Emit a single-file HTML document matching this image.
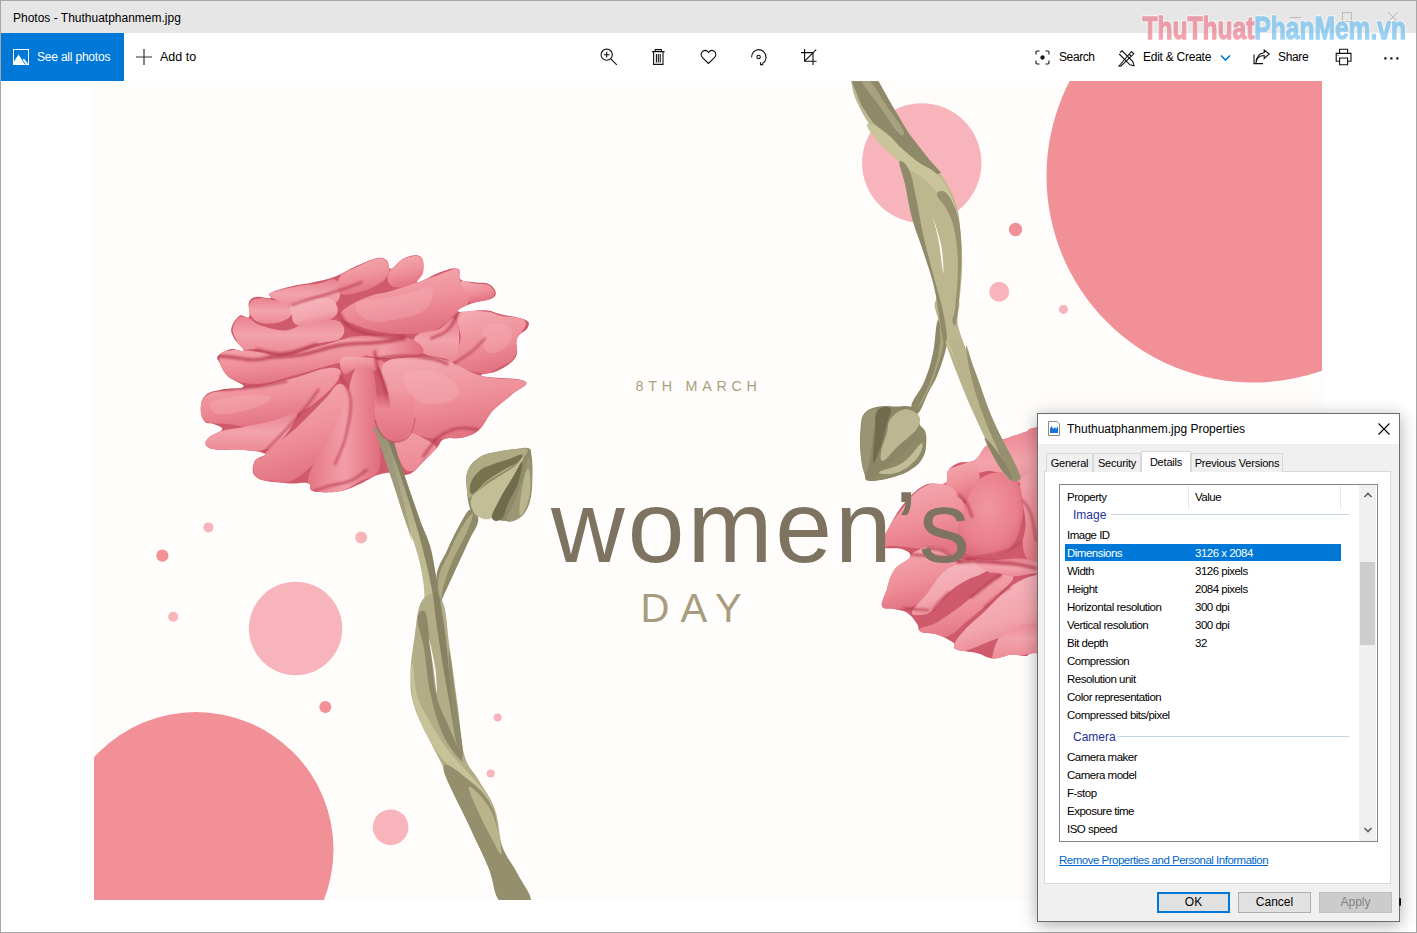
<!DOCTYPE html>
<html><head><meta charset="utf-8">
<style>
*{margin:0;padding:0;box-sizing:border-box}
html,body{width:1417px;height:933px;overflow:hidden;background:#fff;font-family:"Liberation Sans",sans-serif;color:#000}
.abs{position:absolute}
#win{position:absolute;left:0;top:0;width:1417px;height:933px;border:1px solid #a6a6a6;background:#fff}
#titlebar{position:absolute;left:0;top:0;width:1415px;height:32px;background:#e6e6e6}
.t{position:absolute;white-space:nowrap}
#img{position:absolute;left:94px;top:81px;width:1228px;height:819px;background:#fffdfc;overflow:hidden}
#dlg{position:absolute;left:1037px;top:413px;width:363px;height:509px;background:#f0f0f0;border:1px solid #6b6b6b;box-shadow:0 3px 16px rgba(0,0,0,0.32)}
.row{position:absolute;height:18px;font-size:11.5px;letter-spacing:-0.5px;line-height:18px;white-space:nowrap}
.tab{font-size:11px;letter-spacing:-0.2px;line-height:18px;text-align:center;background:#f0f0f0;border:1px solid #d9d9d9;border-bottom:none;white-space:nowrap}
.tab.sel{background:#fff;line-height:20px}
.grp{position:absolute;height:18px;font-size:12px;line-height:18px;color:#1f3396}
.btn{position:absolute;top:478px;width:73px;height:21px;background:#e1e1e1;border:1px solid #adadad;font-size:12px;line-height:19px;text-align:center}
</style></head><body>
<div id="win">
  <div id="titlebar"></div>
</div>
<div class="t" style="left:13px;top:11px;font-size:12px;color:#000">Photos - Thuthuatphanmem.jpg</div>
<!-- window controls -->
<svg class="abs" style="left:1280px;top:8px" width="130" height="20">
  <line x1="10" y1="9.5" x2="21" y2="9.5" stroke="#b9b9b9" stroke-width="1"/>
  <rect x="62.5" y="4.5" width="9" height="9" fill="none" stroke="#b9b9b9"/>
  <path d="M108 4 L118 14 M118 4 L108 14" stroke="#b9b9b9" stroke-width="1"/>
</svg>
<!-- toolbar -->
<div class="abs" style="left:1px;top:33px;width:123px;height:48px;background:#0078d7"></div>
<svg class="abs" style="left:13px;top:49px" width="16" height="16" viewBox="0 0 16 16">
  <rect x="0.5" y="0.5" width="15" height="15" fill="none" stroke="#fff"/>
  <path d="M1 15 L1 12.5 L5.5 5.5 L9.5 11.5 L11 9.5 L15 15 Z" fill="#fff"/><path d="M9.5 11.5 L12.5 15.5" stroke="#0078d7" stroke-width="1"/>
</svg>
<div class="t" style="left:37px;top:50px;font-size:12px;letter-spacing:-0.2px;color:#fff">See all photos</div>
<svg class="abs" style="left:136px;top:49px" width="16" height="16"><path d="M8 0V16M0 8H16" stroke="#333" stroke-width="1.2"/></svg>
<div class="t" style="left:160px;top:50px;font-size:12.5px;color:#000">Add to</div>

<svg id="art" class="abs" style="left:94px;top:81px" width="1228" height="819" viewBox="94 81 1228 819">
  <rect x="94" y="81" width="1228" height="819" fill="#fffdfc"/>
  <g fill="#f19097">
    <circle cx="1253" cy="176" r="206.5"/>
    <circle cx="196" cy="849.5" r="137.5"/>
    <circle cx="1015.5" cy="229.5" r="6.7"/>
    <circle cx="162.4" cy="555.6" r="6.1"/>
    <circle cx="325.3" cy="707" r="6"/>
  </g>
  <g fill="#f8b4bb">
    <circle cx="921.8" cy="163" r="59.7"/>
    <circle cx="295.6" cy="628.5" r="46.7"/>
    <circle cx="390.6" cy="827.2" r="17.8"/>
    <circle cx="999.2" cy="291.7" r="10"/>
    <circle cx="1063.4" cy="309.4" r="4.5"/>
    <circle cx="208.4" cy="527.4" r="5"/>
    <circle cx="173.2" cy="616.7" r="5"/>
    <circle cx="361.2" cy="537.5" r="6"/>
    <circle cx="497.6" cy="717.5" r="4"/>
    <circle cx="490.6" cy="773.5" r="4"/>
  </g>
  <g id="flowers">
<defs>
 <linearGradient id="pk1" x1="0" y1="0" x2="0.3" y2="1"><stop offset="0" stop-color="#f5acb3"/><stop offset="0.6" stop-color="#ef9099"/><stop offset="1" stop-color="#e27483"/></linearGradient>
 <linearGradient id="pk2" x1="0" y1="0" x2="0" y2="1"><stop offset="0" stop-color="#e98290"/><stop offset="0.5" stop-color="#f3a3ab"/><stop offset="1" stop-color="#ec8a95"/></linearGradient>
 <linearGradient id="pk3" x1="0" y1="0" x2="1" y2="0"><stop offset="0" stop-color="#e57684"/><stop offset="0.5" stop-color="#f29ea7"/><stop offset="1" stop-color="#e06c7b"/></linearGradient>
 <radialGradient id="pk4" cx="0.45" cy="0.4" r="0.65"><stop offset="0" stop-color="#f0969f"/><stop offset="0.7" stop-color="#e97f8b"/><stop offset="1" stop-color="#d9677a"/></radialGradient>
 <linearGradient id="lsg" gradientUnits="userSpaceOnUse" x1="0" y1="430" x2="0" y2="630"><stop offset="0" stop-color="#98937a"/><stop offset="0.5" stop-color="#bcb78f"/><stop offset="1" stop-color="#c4bf95"/></linearGradient>
 <linearGradient id="pk5" x1="0" y1="0" x2="0.4" y2="1"><stop offset="0" stop-color="#f7bcc1"/><stop offset="0.7" stop-color="#f3a6ae"/><stop offset="1" stop-color="#e98792"/></linearGradient>
 <linearGradient id="lobe" x1="0" y1="0" x2="0" y2="1"><stop offset="0" stop-color="#ec8893" stop-opacity="0"/><stop offset="0.35" stop-color="#ec8893"/><stop offset="1" stop-color="#e07080"/></linearGradient>
 <linearGradient id="st1" x1="0" y1="0" x2="1" y2="0"><stop offset="0" stop-color="#9d9773"/><stop offset="0.5" stop-color="#c6c198"/><stop offset="1" stop-color="#8f896a"/></linearGradient>
 <linearGradient id="bud" x1="0" y1="0" x2="1" y2="1"><stop offset="0" stop-color="#7c7a55"/><stop offset="0.5" stop-color="#a6a47a"/><stop offset="1" stop-color="#6f6d4b"/></linearGradient>
 <clipPath id="lfclip"><path d="M200.7,408.1 C201.0,402.7 201.8,398.4 206.1,394.7 C210.4,391.0 214.7,391.0 222.2,389.4 C229.7,387.8 242.5,389.4 243.6,386.7 C244.7,384.0 232.3,380.8 227.5,376.0 C222.7,371.2 221.4,366.6 219.5,362.6 C217.6,358.6 216.0,358.6 218.1,355.9 C220.2,353.2 225.1,350.3 230.2,349.2 C235.3,348.1 242.8,352.7 243.6,350.5 C244.4,348.3 236.6,343.0 234.2,338.4 C231.8,333.8 230.4,332.2 231.5,327.7 C232.6,323.2 236.1,317.8 239.6,315.7 C243.1,313.6 247.1,319.7 249.0,317.0 C250.9,314.3 247.4,306.3 249.0,302.3 C250.6,298.3 252.7,297.7 257.0,296.9 C261.3,296.1 267.7,299.0 270.4,298.2 C273.1,297.4 266.1,295.3 270.4,292.9 C274.7,290.5 283.2,288.3 291.8,286.2 C300.4,284.1 304.7,284.1 313.3,282.2 C321.9,280.3 326.1,280.0 334.7,276.8 C343.3,273.6 347.6,269.9 356.2,266.1 C364.8,262.3 371.4,259.1 377.6,258.0 C383.8,256.9 384.3,258.5 387.0,260.7 C389.7,262.9 387.5,269.3 391.0,268.8 C394.5,268.3 398.5,260.4 404.4,258.0 C410.3,255.6 416.7,254.0 420.5,256.7 C424.3,259.4 423.7,266.3 423.2,271.4 C422.7,276.5 414.1,282.2 417.8,282.2 C421.5,282.2 433.9,274.1 441.9,271.4 C449.9,268.7 454.2,267.2 458.0,268.8 C461.8,270.4 457.5,276.8 460.7,279.5 C463.9,282.2 468.2,281.1 474.1,282.2 C480.0,283.3 486.2,281.9 490.2,284.8 C494.2,287.7 498.0,293.1 494.2,296.9 C490.4,300.7 478.6,300.7 471.4,303.6 C464.2,306.5 455.3,310.3 458.0,311.6 C460.7,312.9 476.2,309.8 484.8,310.3 C493.4,310.8 492.9,312.4 500.9,314.3 C508.9,316.2 519.6,317.0 525.0,319.7 C530.4,322.4 529.3,324.0 527.7,327.7 C526.1,331.4 519.4,332.5 517.0,338.4 C514.6,344.3 519.4,350.8 515.6,357.2 C511.8,363.6 504.9,366.8 498.2,370.6 C491.5,374.4 476.7,373.9 482.1,376.0 C487.5,378.1 519.1,377.6 525.0,381.3 C530.9,385.0 518.0,388.8 511.6,394.7 C505.2,400.6 499.2,403.8 492.8,410.8 C486.4,417.8 485.3,424.2 479.4,429.6 C473.5,435.0 470.4,435.7 463.4,437.6 C456.4,439.5 450.0,436.8 444.6,438.9 C439.2,441.0 440.9,443.7 436.6,448.3 C432.3,452.9 428.0,456.9 423.2,461.7 C418.4,466.5 416.7,469.7 412.4,472.4 C408.1,475.1 405.4,475.1 401.7,475.1 C398.0,475.1 398.5,472.4 393.7,472.4 C388.9,472.4 384.0,472.9 377.6,475.1 C371.2,477.3 369.0,480.0 361.5,483.2 C354.0,486.4 349.7,489.6 340.1,491.2 C330.5,492.8 319.7,492.8 313.3,491.2 C306.9,489.6 313.3,484.8 307.9,483.2 C302.5,481.6 296.7,484.3 286.5,483.2 C276.3,482.1 263.4,482.1 257.0,477.8 C250.6,473.5 252.7,466.5 254.3,461.7 C255.9,456.9 267.7,456.1 265.0,453.7 C262.3,451.3 250.5,450.5 240.9,449.7 C231.3,448.9 223.8,450.5 216.8,449.7 C209.8,448.9 207.7,448.0 206.1,445.6 C204.5,443.2 205.6,440.8 208.8,437.6 C212.0,434.4 221.1,432.3 222.2,429.6 C223.3,426.9 217.6,425.8 214.1,424.2 C210.6,422.6 207.4,424.7 204.7,421.5 C202.0,418.3 200.4,413.5 200.7,408.1Z"/></clipPath>
 <filter id="soft" x="-5%" y="-5%" width="110%" height="110%"><feGaussianBlur stdDeviation="0.9"/></filter>
 <clipPath id="rfbox"><path d="M850 400H1037V413H1200V700H850Z"/></clipPath>
 <clipPath id="rfclip"><path d="M1041.6,426.7 C1022.7,429.1 1031.9,430.0 1025.5,432.1 C1019.1,434.2 1015.3,435.5 1009.4,437.4 C1003.5,439.3 1000.8,439.6 996.0,441.5 C991.2,443.4 989.6,443.1 985.3,446.8 C981.0,450.5 980.0,457.0 974.6,460.2 C969.2,463.4 963.9,460.8 958.5,462.9 C953.1,465.0 950.5,466.9 947.8,470.9 C945.1,474.9 949.9,480.0 945.1,483.0 C940.3,486.0 932.2,481.1 923.6,485.7 C915.0,490.3 909.7,496.4 902.2,505.8 C894.7,515.2 890.9,524.6 886.1,532.6 C881.3,540.6 878.0,542.9 878.0,546.0 C878.0,549.1 881.3,547.6 886.1,548.2 C890.9,548.8 897.4,547.5 902.2,549.2 C907.0,550.9 911.8,552.6 910.2,556.8 C908.6,561.0 898.9,563.2 894.1,570.2 C889.3,577.2 888.5,584.4 886.1,591.6 C883.7,598.8 880.5,602.9 882.1,606.4 C883.7,609.9 889.0,607.7 894.1,609.0 C899.2,610.3 902.9,610.1 907.5,613.1 C912.1,616.1 914.2,620.1 916.9,623.8 C919.6,627.5 916.9,629.7 920.9,631.8 C924.9,633.9 930.6,632.3 937.0,634.5 C943.4,636.7 949.3,639.6 953.1,642.6 C956.9,645.6 951.0,647.2 955.8,649.3 C960.6,651.4 969.8,651.4 977.3,653.3 C984.8,655.2 986.3,658.3 993.3,658.6 C1000.3,658.9 1005.7,655.1 1012.1,654.6 C1018.5,654.1 1019.6,656.3 1025.5,656.0 C1031.4,655.7 1022.7,652.5 1041.6,653.3 C1060.5,654.1 1104.3,706.7 1120.0,660.0 C1135.7,613.3 1135.7,466.7 1120.0,420.0 C1104.3,373.3 1060.5,424.3 1041.6,426.7Z"/></clipPath>
</defs>

<g id="lf"><path d="M200.7,408.1 C201.0,402.7 201.8,398.4 206.1,394.7 C210.4,391.0 214.7,391.0 222.2,389.4 C229.7,387.8 242.5,389.4 243.6,386.7 C244.7,384.0 232.3,380.8 227.5,376.0 C222.7,371.2 221.4,366.6 219.5,362.6 C217.6,358.6 216.0,358.6 218.1,355.9 C220.2,353.2 225.1,350.3 230.2,349.2 C235.3,348.1 242.8,352.7 243.6,350.5 C244.4,348.3 236.6,343.0 234.2,338.4 C231.8,333.8 230.4,332.2 231.5,327.7 C232.6,323.2 236.1,317.8 239.6,315.7 C243.1,313.6 247.1,319.7 249.0,317.0 C250.9,314.3 247.4,306.3 249.0,302.3 C250.6,298.3 252.7,297.7 257.0,296.9 C261.3,296.1 267.7,299.0 270.4,298.2 C273.1,297.4 266.1,295.3 270.4,292.9 C274.7,290.5 283.2,288.3 291.8,286.2 C300.4,284.1 304.7,284.1 313.3,282.2 C321.9,280.3 326.1,280.0 334.7,276.8 C343.3,273.6 347.6,269.9 356.2,266.1 C364.8,262.3 371.4,259.1 377.6,258.0 C383.8,256.9 384.3,258.5 387.0,260.7 C389.7,262.9 387.5,269.3 391.0,268.8 C394.5,268.3 398.5,260.4 404.4,258.0 C410.3,255.6 416.7,254.0 420.5,256.7 C424.3,259.4 423.7,266.3 423.2,271.4 C422.7,276.5 414.1,282.2 417.8,282.2 C421.5,282.2 433.9,274.1 441.9,271.4 C449.9,268.7 454.2,267.2 458.0,268.8 C461.8,270.4 457.5,276.8 460.7,279.5 C463.9,282.2 468.2,281.1 474.1,282.2 C480.0,283.3 486.2,281.9 490.2,284.8 C494.2,287.7 498.0,293.1 494.2,296.9 C490.4,300.7 478.6,300.7 471.4,303.6 C464.2,306.5 455.3,310.3 458.0,311.6 C460.7,312.9 476.2,309.8 484.8,310.3 C493.4,310.8 492.9,312.4 500.9,314.3 C508.9,316.2 519.6,317.0 525.0,319.7 C530.4,322.4 529.3,324.0 527.7,327.7 C526.1,331.4 519.4,332.5 517.0,338.4 C514.6,344.3 519.4,350.8 515.6,357.2 C511.8,363.6 504.9,366.8 498.2,370.6 C491.5,374.4 476.7,373.9 482.1,376.0 C487.5,378.1 519.1,377.6 525.0,381.3 C530.9,385.0 518.0,388.8 511.6,394.7 C505.2,400.6 499.2,403.8 492.8,410.8 C486.4,417.8 485.3,424.2 479.4,429.6 C473.5,435.0 470.4,435.7 463.4,437.6 C456.4,439.5 450.0,436.8 444.6,438.9 C439.2,441.0 440.9,443.7 436.6,448.3 C432.3,452.9 428.0,456.9 423.2,461.7 C418.4,466.5 416.7,469.7 412.4,472.4 C408.1,475.1 405.4,475.1 401.7,475.1 C398.0,475.1 398.5,472.4 393.7,472.4 C388.9,472.4 384.0,472.9 377.6,475.1 C371.2,477.3 369.0,480.0 361.5,483.2 C354.0,486.4 349.7,489.6 340.1,491.2 C330.5,492.8 319.7,492.8 313.3,491.2 C306.9,489.6 313.3,484.8 307.9,483.2 C302.5,481.6 296.7,484.3 286.5,483.2 C276.3,482.1 263.4,482.1 257.0,477.8 C250.6,473.5 252.7,466.5 254.3,461.7 C255.9,456.9 267.7,456.1 265.0,453.7 C262.3,451.3 250.5,450.5 240.9,449.7 C231.3,448.9 223.8,450.5 216.8,449.7 C209.8,448.9 207.7,448.0 206.1,445.6 C204.5,443.2 205.6,440.8 208.8,437.6 C212.0,434.4 221.1,432.3 222.2,429.6 C223.3,426.9 217.6,425.8 214.1,424.2 C210.6,422.6 207.4,424.7 204.7,421.5 C202.0,418.3 200.4,413.5 200.7,408.1Z" fill="#cf5a6c"/><g clip-path="url(#lfclip)"><path d="M250.3,302.3 C252.2,299.1 255.7,298.7 259.7,298.2 C263.7,297.7 265.0,298.5 270.4,299.6 C275.8,300.7 282.2,300.7 286.5,303.6 C290.8,306.5 293.4,310.5 291.8,314.3 C290.2,318.1 284.8,320.8 278.4,322.4 C272.0,324.0 265.3,324.0 259.7,322.4 C254.1,320.8 252.2,318.3 250.3,314.3 C248.4,310.3 248.4,305.5 250.3,302.3Z" fill="url(#pk2)"/><path d="M270.4,292.9 C275.2,290.5 287.6,288.1 297.2,286.2 C306.8,284.3 311.1,284.8 318.6,283.5 C326.1,282.2 330.4,278.2 334.7,279.5 C339.0,280.8 340.1,285.4 340.1,290.2 C340.1,295.0 340.6,299.8 334.7,303.6 C328.8,307.4 319.2,308.5 310.6,309.0 C302.0,309.5 299.3,308.5 291.8,306.3 C284.3,304.1 277.4,300.9 273.1,298.2 C268.8,295.5 265.6,295.3 270.4,292.9Z" fill="url(#pk2)"/><path d="M340.1,276.8 C343.8,271.4 351.3,269.7 358.8,266.1 C366.3,262.5 372.0,259.4 377.6,258.6 C383.2,257.8 384.9,259.0 387.0,262.1 C389.1,265.2 390.2,269.6 388.3,274.1 C386.4,278.6 384.0,281.0 377.6,284.8 C371.2,288.6 363.7,291.3 356.2,292.9 C348.7,294.5 343.3,296.1 340.1,292.9 C336.9,289.7 336.4,282.2 340.1,276.8Z" fill="url(#pk1)"/><path d="M291.5,303.6 C295.0,300.7 301.4,300.7 308.9,299.6 C316.4,298.5 323.4,296.9 329.0,298.2 C334.6,299.5 335.9,302.5 337.0,306.3 C338.1,310.1 338.6,313.3 334.3,317.0 C330.0,320.7 323.1,323.4 315.6,325.0 C308.1,326.6 301.6,327.1 296.8,325.0 C292.0,322.9 292.6,318.6 291.5,314.3 C290.4,310.0 288.0,306.5 291.5,303.6Z" fill="url(#pk5)"/><path d="M391.0,268.8 C394.2,264.1 398.5,260.9 404.4,258.6 C410.3,256.3 416.7,254.9 420.5,257.5 C424.3,260.1 424.0,266.2 423.2,271.4 C422.4,276.6 421.3,280.3 416.5,283.5 C411.7,286.7 404.6,287.8 399.0,287.5 C393.4,287.2 389.9,285.9 388.3,282.2 C386.7,278.5 387.8,273.5 391.0,268.8Z" fill="url(#pk1)"/><path d="M460.7,282.2 C462.3,279.3 468.2,282.7 474.1,283.5 C480.0,284.3 486.5,283.5 490.2,286.2 C493.9,288.9 496.0,293.7 492.8,296.9 C489.6,300.1 479.5,302.0 474.1,302.3 C468.7,302.6 468.7,302.2 466.0,298.2 C463.3,294.2 459.1,285.1 460.7,282.2Z" fill="url(#pk1)"/><path d="M340.1,314.3 C341.7,308.9 353.5,303.0 364.2,298.2 C374.9,293.4 381.4,293.9 393.7,290.2 C406.0,286.5 415.1,283.3 425.8,279.5 C436.5,275.7 440.9,273.4 447.3,271.4 C453.7,269.4 455.3,267.1 458.0,269.3 C460.7,271.5 458.6,275.9 460.7,282.2 C462.8,288.5 469.8,294.5 468.7,300.9 C467.6,307.3 461.2,308.9 455.3,314.3 C449.4,319.7 446.2,323.9 439.2,327.7 C432.2,331.5 430.7,332.0 420.5,333.1 C410.3,334.2 401.2,334.7 388.3,333.1 C375.4,331.5 365.8,328.8 356.2,325.0 C346.6,321.2 338.5,319.7 340.1,314.3Z" fill="url(#pk1)"/><path d="M458.0,314.3 C462.8,308.9 476.2,311.3 484.8,311.6 C493.4,311.9 492.9,313.8 500.9,315.7 C508.9,317.6 521.5,316.5 525.0,321.0 C528.5,325.5 520.4,331.2 518.3,338.4 C516.2,345.6 518.3,351.3 514.3,357.2 C510.3,363.1 504.6,364.7 498.2,367.9 C491.8,371.1 490.7,374.4 482.1,373.3 C473.5,372.2 459.6,369.6 455.3,362.6 C451.0,355.6 460.2,348.1 460.7,338.4 C461.2,328.7 453.2,319.7 458.0,314.3Z" fill="url(#pk1)"/><path d="M232.9,327.7 C233.7,323.4 236.4,318.9 239.6,317.0 C242.8,315.1 245.0,316.7 249.0,318.3 C253.0,319.9 252.7,322.6 259.7,325.0 C266.7,327.4 275.2,330.4 283.8,330.4 C292.4,330.4 293.5,327.1 302.6,325.0 C311.7,322.9 321.4,319.7 329.4,319.7 C337.4,319.7 340.7,321.3 342.8,325.0 C344.9,328.7 345.5,334.6 340.1,338.4 C334.7,342.2 327.3,340.8 316.0,343.8 C304.7,346.8 295.6,352.1 283.8,353.2 C272.0,354.3 265.0,350.0 257.0,349.2 C249.0,348.4 247.9,351.4 243.6,349.2 C239.3,347.0 237.7,342.7 235.6,338.4 C233.5,334.1 232.1,332.0 232.9,327.7Z" fill="url(#pk2)"/><path d="M417.8,334.4 C422.6,331.5 432.0,332.3 439.2,329.1 C446.4,325.9 450.0,316.4 454.0,318.3 C458.0,320.2 459.3,329.8 459.3,338.4 C459.3,347.0 456.9,357.2 454.0,361.2 C451.1,365.2 450.2,359.8 444.6,358.5 C439.0,357.2 431.7,357.4 425.8,354.5 C419.9,351.6 416.7,347.8 415.1,343.8 C413.5,339.8 413.0,337.3 417.8,334.4Z" fill="url(#pk2)"/><path d="M345.4,338.4 C349.7,335.2 364.7,335.8 377.6,335.8 C390.5,335.8 400.7,335.2 409.8,338.4 C418.9,341.6 425.4,348.0 423.2,351.8 C421.0,355.6 408.1,356.1 399.0,357.2 C389.9,358.3 386.2,358.3 377.6,357.2 C369.0,356.1 362.6,355.6 356.2,351.8 C349.8,348.0 341.1,341.6 345.4,338.4Z" fill="url(#pk3)"/><path d="M219.5,357.2 C220.0,352.1 222.7,351.6 230.2,350.5 C237.7,349.4 246.3,350.7 257.0,351.8 C267.7,352.9 271.5,357.0 283.8,355.9 C296.1,354.8 305.2,350.0 318.6,346.5 C332.0,343.0 339.0,338.9 350.8,338.4 C362.6,337.9 375.5,340.0 377.6,343.8 C379.7,347.6 371.1,352.9 361.5,357.2 C351.9,361.5 343.3,361.4 329.4,365.2 C315.5,369.0 306.3,372.2 291.8,376.0 C277.3,379.8 269.9,384.0 257.0,384.0 C244.1,384.0 235.0,381.4 227.5,376.0 C220.0,370.6 219.0,362.3 219.5,357.2Z" fill="url(#pk1)"/><path d="M200.7,408.1 C200.7,403.0 201.8,399.6 206.1,396.1 C210.4,392.6 212.0,392.6 222.2,390.7 C232.4,388.8 243.1,389.1 257.0,386.7 C270.9,384.3 277.3,382.4 291.8,378.6 C306.3,374.8 319.7,368.4 329.4,367.9 C339.1,367.4 342.3,369.6 340.1,376.0 C337.9,382.4 328.3,392.1 318.6,400.1 C308.9,408.1 303.6,410.8 291.8,416.2 C280.0,421.6 272.0,425.3 259.7,426.9 C247.4,428.5 240.9,425.3 230.2,424.2 C219.5,423.1 212.0,424.7 206.1,421.5 C200.2,418.3 200.7,413.2 200.7,408.1Z" fill="url(#pk1)"/><path d="M206.1,445.6 C204.5,443.2 205.6,440.5 208.8,437.6 C212.0,434.7 215.2,433.0 222.2,430.9 C229.2,428.8 234.0,428.8 243.6,426.9 C253.2,425.0 259.7,424.2 270.4,421.5 C281.1,418.8 295.6,409.2 297.2,413.5 C298.8,417.8 286.4,435.5 278.4,443.0 C270.4,450.5 266.6,449.7 257.0,451.0 C247.4,452.3 238.2,450.0 230.2,449.7 C222.2,449.4 221.6,450.5 216.8,449.7 C212.0,448.9 207.7,448.0 206.1,445.6Z" fill="url(#pk2)"/><path d="M257.0,477.8 C253.8,474.0 251.6,467.6 254.3,461.7 C257.0,455.8 261.8,455.3 270.4,448.3 C279.0,441.3 286.5,436.5 297.2,426.9 C307.9,417.3 315.4,408.7 324.0,400.1 C332.6,391.5 334.7,384.0 340.1,384.0 C345.5,384.0 350.8,390.5 350.8,400.1 C350.8,409.7 346.5,420.4 340.1,432.2 C333.7,444.0 328.3,449.3 318.6,459.0 C308.9,468.7 301.4,476.2 291.8,480.5 C282.2,484.8 277.4,481.0 270.4,480.5 C263.4,480.0 260.2,481.6 257.0,477.8Z" fill="url(#pk1)"/><path d="M307.9,483.2 C307.9,488.6 306.9,489.6 313.3,491.2 C319.7,492.8 330.5,493.3 340.1,491.2 C349.7,489.1 354.0,484.3 361.5,480.5 C369.0,476.7 373.8,478.8 377.6,472.4 C381.4,466.0 380.3,460.6 380.3,448.3 C380.3,436.0 379.2,426.3 377.6,410.8 C376.0,395.3 376.5,379.2 372.2,370.6 C367.9,362.0 361.6,362.0 356.2,367.9 C350.8,373.8 350.8,386.2 345.4,400.1 C340.0,414.0 335.8,424.7 329.4,437.6 C323.0,450.5 317.6,455.3 313.3,464.4 C309.0,473.5 307.9,477.8 307.9,483.2Z" fill="url(#pk3)"/><path d="M341.4,358.5 C344.9,355.2 354.3,356.9 361.5,357.2 C368.7,357.5 374.9,357.2 377.6,359.9 C380.3,362.6 379.2,368.7 374.9,370.6 C370.6,372.5 362.4,368.7 356.2,369.3 C350.0,369.9 347.1,376.0 344.1,373.8 C341.1,371.6 337.9,361.8 341.4,358.5Z" fill="url(#pk1)"/><path d="M377.6,362.6 C376.5,356.2 384.5,360.4 388.3,367.9 C392.1,375.4 395.3,386.2 396.4,400.1 C397.5,414.0 392.6,424.7 393.7,437.6 C394.8,450.5 398.0,457.7 401.7,464.4 C405.4,471.1 408.1,471.9 412.4,471.1 C416.7,470.3 418.4,465.0 423.2,460.4 C428.0,455.8 437.7,453.4 436.6,448.3 C435.5,443.2 424.8,439.2 417.8,434.9 C410.8,430.6 406.5,433.9 401.7,426.9 C396.9,419.9 398.5,413.0 393.7,400.1 C388.9,387.2 378.7,369.0 377.6,362.6Z" fill="url(#pk2)"/><path d="M383.0,365.2 C387.3,357.7 397.5,358.3 409.8,357.2 C422.1,356.1 430.1,356.1 444.6,359.9 C459.1,363.7 466.0,371.7 482.1,376.0 C498.2,380.3 519.1,377.6 525.0,381.3 C530.9,385.0 518.0,388.8 511.6,394.7 C505.2,400.6 499.2,403.8 492.8,410.8 C486.4,417.8 485.3,424.2 479.4,429.6 C473.5,435.0 470.4,435.7 463.4,437.6 C456.4,439.5 453.7,439.4 444.6,438.9 C435.5,438.4 427.4,438.4 417.8,434.9 C408.2,431.4 402.3,429.5 396.4,421.5 C390.5,413.5 391.0,406.0 388.3,394.7 C385.6,383.4 378.7,372.7 383.0,365.2Z" fill="url(#pk1)"/><path d="M404.4,376.0 C407.1,370.1 421.6,369.5 431.2,370.6 C440.8,371.7 447.2,376.5 452.6,381.3 C458.0,386.1 460.1,390.4 458.0,394.7 C455.9,399.0 449.9,401.7 441.9,402.8 C433.9,403.9 425.3,405.5 417.8,400.1 C410.3,394.7 401.7,381.9 404.4,376.0Z" fill="#f7b9bf" opacity="0.3"/><path d="M211.4,402.8 C214.1,399.6 221.1,399.0 230.2,397.4 C239.3,395.8 249.0,394.2 257.0,394.7 C265.0,395.2 273.1,396.9 270.4,400.1 C267.7,403.3 254.3,408.1 243.6,410.8 C232.9,413.5 223.2,415.1 216.8,413.5 C210.4,411.9 208.7,406.0 211.4,402.8Z" fill="#f7b9bf" opacity="0.3"/><path d="M356.2,303.6 C359.4,299.3 372.3,300.3 383.0,298.2 C393.7,296.1 400.2,295.0 409.8,292.9 C419.4,290.8 428.0,284.3 431.2,287.5 C434.4,290.7 433.3,302.6 425.8,309.0 C418.3,315.4 405.5,317.6 393.7,319.7 C381.9,321.8 374.4,322.9 366.9,319.7 C359.4,316.5 353.0,307.9 356.2,303.6Z" fill="#f7b9bf" opacity="0.3"/><path d="M484.8,327.7 C489.1,322.9 500.8,322.9 506.2,325.0 C511.6,327.1 513.2,333.0 511.6,338.4 C510.0,343.8 503.6,349.6 498.2,351.8 C492.8,354.0 487.5,354.0 484.8,349.2 C482.1,344.4 480.5,332.5 484.8,327.7Z" fill="#f7b9bf" opacity="0.3"/><g filter="url(#soft)"><path d="M218.1,355.9 C221.1,356.2 225.7,356.4 232.9,357.2 C240.1,358.0 246.8,359.9 254.3,359.9 C261.8,359.9 267.2,357.7 270.4,357.2" stroke="#b53a4e" stroke-width="3.4" fill="none" stroke-linecap="round" opacity="0.75"/><path d="M270.4,357.2 C276.8,356.7 288.7,356.9 302.6,354.5 C316.5,352.1 325.1,347.5 340.1,345.1 C355.1,342.7 364.7,343.8 377.6,342.5 C390.5,341.2 399.0,339.2 404.4,338.4" stroke="#b53a4e" stroke-width="3.6" fill="none" stroke-linecap="round" opacity="0.75"/><path d="M374.9,351.8 C375.4,355.0 375.5,360.4 377.6,367.9 C379.7,375.4 383.5,379.7 385.6,389.4 C387.7,399.1 388.3,406.6 388.3,416.2 C388.3,425.8 386.1,433.3 385.6,437.6" stroke="#b53a4e" stroke-width="3.1" fill="none" stroke-linecap="round" opacity="0.75"/><path d="M377.6,358.5 C383.0,358.0 393.7,355.9 404.4,355.9 C415.1,355.9 422.6,356.9 431.2,358.5 C439.8,360.1 444.1,362.8 447.3,363.9" stroke="#b53a4e" stroke-width="2.9" fill="none" stroke-linecap="round" opacity="0.75"/><path d="M455.3,362.6 C458.5,360.4 465.5,356.6 471.4,351.8 C477.3,347.0 482.1,341.1 484.8,338.4" stroke="#b53a4e" stroke-width="2.1" fill="none" stroke-linecap="round" opacity="0.75"/><path d="M291.8,304.9 C296.1,303.6 303.6,301.1 313.3,298.2 C323.0,295.3 330.5,293.4 340.1,290.2 C349.7,287.0 357.2,283.8 361.5,282.2" stroke="#b53a4e" stroke-width="2.3" fill="none" stroke-linecap="round" opacity="0.75"/><path d="M340.1,314.3 C342.2,317.0 343.3,323.4 350.8,327.7 C358.3,332.0 366.9,334.1 377.6,335.8 C388.3,337.5 399.0,336.2 404.4,336.3" stroke="#b53a4e" stroke-width="3.1" fill="none" stroke-linecap="round" opacity="0.75"/><path d="M458.0,314.3 C455.9,317.5 452.7,325.6 447.3,330.4 C441.9,335.2 434.4,336.8 431.2,338.4" stroke="#b53a4e" stroke-width="2.6" fill="none" stroke-linecap="round" opacity="0.75"/><path d="M318.6,389.4 C315.4,393.7 310.6,401.2 302.6,410.8 C294.6,420.4 287.0,428.5 278.4,437.6 C269.8,446.7 263.4,452.6 259.7,456.4" stroke="#b53a4e" stroke-width="2.1" fill="none" stroke-linecap="round" opacity="0.75"/><path d="M222.2,389.9 C228.6,389.4 241.4,388.9 254.3,387.2 C267.2,385.5 280.1,382.5 286.5,381.3" stroke="#b53a4e" stroke-width="2.3" fill="none" stroke-linecap="round" opacity="0.75"/><path d="M423.2,456.4 C424.8,454.2 428.0,449.6 431.2,445.6 C434.4,441.6 433.8,439.8 439.2,436.3 C444.6,432.8 450.0,429.4 458.0,428.2 C466.0,427.0 475.1,429.7 479.4,430.1" stroke="#b53a4e" stroke-width="2.6" fill="none" stroke-linecap="round" opacity="0.75"/><path d="M340.1,376.0 C342.2,380.8 349.7,387.8 350.8,400.1 C351.9,412.4 348.6,424.7 345.4,437.6 C342.2,450.5 336.8,459.0 334.7,464.4" stroke="#b53a4e" stroke-width="2.1" fill="none" stroke-linecap="round" opacity="0.75"/><path d="M313.3,491.2 C316.5,490.1 321.9,487.9 329.4,485.8 C336.9,483.7 343.3,483.7 350.8,480.5 C358.3,477.3 363.7,471.9 366.9,469.8" stroke="#b53a4e" stroke-width="2.3" fill="none" stroke-linecap="round" opacity="0.75"/><path d="M257.0,349.2 C262.4,350.0 272.0,354.3 283.8,353.2 C295.6,352.1 309.6,345.7 316.0,343.8" stroke="#b53a4e" stroke-width="2.3" fill="none" stroke-linecap="round" opacity="0.75"/></g></g></g>
<g id="lstem">
 <path d="M374,428 C370.6,429.6 373.4,425.6 377.0,436.0 C380.6,446.4 386.4,463.2 392.0,480.0 C397.6,496.8 400.4,506.8 405.0,520.0 C409.6,533.2 411.4,534.0 415.0,546.0 C418.6,558.0 420.4,563.2 423.0,580.0 C425.6,596.8 423.8,620.0 428.0,630.0 C432.2,640.0 441.4,634.8 444.0,630.0 C446.6,625.2 442.6,616.8 441.0,606.0 C439.4,595.2 438.2,588.0 436.0,576.0 C433.8,564.0 433.2,557.2 430.0,546.0 C426.8,534.8 425.4,535.0 420.0,520.0 C414.6,505.0 408.6,487.4 403.0,471.0 C397.4,454.6 393.8,446.6 392.0,438.0 C390.2,429.4 397.6,430.0 394.0,428.0 C390.4,426.0 377.4,426.4 374.0,428.0Z" fill="url(#lsg)"/>
 <path d="M422.4,600.0 C416.9,607.7 416.7,623.2 414.3,638.6 C411.9,654.0 410.4,663.7 410.4,677.2 C410.4,690.7 410.9,694.6 414.3,706.2 C417.7,717.8 420.8,721.7 427.2,735.2 C433.6,748.7 438.1,755.8 446.5,773.8 C454.9,791.8 460.6,806.6 469.0,825.3 C477.4,844.0 481.9,851.7 488.3,867.1 C494.7,882.5 492.8,895.4 501.2,902.5 C509.6,909.6 527.0,908.3 530.2,902.5 C533.4,896.7 522.8,884.5 517.3,873.6 C511.8,862.7 507.3,860.7 502.8,847.8 C498.3,834.9 499.6,822.7 494.8,809.2 C490.0,795.7 484.8,791.1 478.7,780.2 C472.6,769.3 468.4,769.3 464.2,754.5 C460.0,739.7 460.7,727.4 457.8,706.2 C454.9,685.0 452.9,669.5 449.7,648.3 C446.5,627.1 447.2,609.7 441.7,600.0 C436.2,590.3 427.9,592.3 422.4,600.0Z" fill="#b2ad86"/>
 <path d="M374,428 C372.6,428.0 373.4,425.6 377.0,436.0 C380.6,446.4 386.4,463.2 392.0,480.0 C397.6,496.8 401.0,508.0 405.0,520.0 C409.0,532.0 412.4,544.0 412.0,540.0 C411.6,536.0 407.0,516.0 403.0,500.0 C399.0,484.0 395.8,472.8 392.0,460.0 C388.2,447.2 387.6,442.4 384.0,436.0 C380.4,429.6 375.4,428.0 374.0,428.0Z" fill="#9a9576" opacity="0.6"/>
 <path d="M392,438 C395.0,444.2 397.4,454.6 403.0,471.0 C408.6,487.4 414.6,505.0 420.0,520.0 C425.4,535.0 426.8,534.8 430.0,546.0 C433.2,557.2 433.8,564.0 436.0,576.0 C438.2,588.0 439.0,593.2 441.0,606.0 C443.0,618.8 444.2,625.2 446.0,640.0 C447.8,654.8 448.0,664.0 450.0,680.0 C452.0,696.0 453.6,705.6 456.0,720.0 C458.4,734.4 461.8,747.0 462.0,752.0 C462.2,757.0 459.6,755.4 457.0,745.0 C454.4,734.6 452.0,717.0 449.0,700.0 C446.0,683.0 444.6,676.0 442.0,660.0 C439.4,644.0 438.0,634.0 436.0,620.0 C434.0,606.0 434.8,604.8 432.0,590.0 C429.2,575.2 426.4,563.0 422.0,546.0 C417.6,529.0 414.8,520.6 410.0,505.0 C405.2,489.4 402.4,481.0 398.0,468.0 C393.6,455.0 389.2,446.0 388.0,440.0 C386.8,434.0 389.0,431.8 392.0,438.0Z" fill="#7f7a5d" opacity="0.85"/>
 <path d="M417.5,619.3 C417.2,626.4 421.4,633.5 424.0,648.3 C426.6,663.1 426.5,675.9 430.4,693.3 C434.3,710.7 436.9,721.7 443.3,735.2 C449.7,748.7 461.3,762.2 462.6,760.9 C463.9,759.6 454.9,741.6 449.7,728.7 C444.5,715.8 440.7,712.7 436.8,696.6 C432.9,680.5 432.6,665.0 430.4,648.3 C428.2,631.6 428.2,618.7 425.6,612.9 C423.0,607.1 417.8,612.2 417.5,619.3Z" fill="#8d8868"/>
 <path d="M449,650 C450.0,650.0 453.2,679.6 456.0,700.0 C458.8,720.4 462.6,742.4 463.0,752.0 C463.4,761.6 460.4,758.4 458.0,748.0 C455.6,737.6 452.8,719.6 451.0,700.0 C449.2,680.4 448.0,650.0 449.0,650.0Z" fill="#908b6a"/>
 <path d="M412.7,664.4 C414.0,667.6 414.0,685.0 417.5,696.6 C421.0,708.2 424.6,712.0 430.4,722.3 C436.2,732.6 438.8,737.7 446.5,748.0 C454.2,758.3 461.3,764.8 469.0,773.8 C476.7,782.8 480.6,786.0 485.1,793.1 C489.6,800.2 494.2,809.2 491.6,809.2 C489.0,809.2 480.6,801.5 472.2,793.1 C463.8,784.7 458.1,777.7 449.7,767.4 C441.3,757.1 437.2,753.2 430.4,741.6 C423.6,730.0 419.8,721.6 415.9,709.4 C412.0,697.2 411.7,689.5 411.1,680.5 C410.5,671.5 411.4,661.2 412.7,664.4Z" fill="#c7c297"/>
 <path d="M443.3,767.4 C443.3,758.4 459.3,772.5 469.0,780.2 C478.7,787.9 485.2,793.1 491.6,806.0 C498.0,818.9 496.1,831.1 501.2,844.6 C506.3,858.1 511.5,862.0 517.3,873.6 C523.1,885.2 533.4,896.7 530.2,902.5 C527.0,908.3 509.6,909.6 501.2,902.5 C492.8,895.4 494.7,882.5 488.3,867.1 C481.9,851.7 478.0,845.2 469.0,825.3 C460.0,805.4 443.3,776.4 443.3,767.4Z" fill="#958f6d"/>
 <path d="M469.0,786.7 C470.9,785.4 482.5,797.0 488.3,806.0 C494.1,815.0 495.4,822.0 498.0,831.7 C500.6,841.4 502.5,853.0 501.2,854.3 C499.9,855.6 496.1,846.6 491.6,838.2 C487.1,829.8 483.2,822.7 478.7,812.4 C474.2,802.1 467.1,788.0 469.0,786.7Z" fill="#b9b48c"/>
 <path d="M428.8,638.6 C428.4,638.0 431.4,653.5 433.0,664.4 C434.6,675.3 436.4,692.7 436.8,693.3 C437.2,693.9 436.8,678.5 435.2,667.6 C433.6,656.7 429.2,639.2 428.8,638.6Z" fill="#fffdfc"/>
 <path d="M440.7,601.5 C439.4,597.2 435.2,586.1 436.5,575.8 C437.8,565.5 442.5,560.4 447.2,550.1 C451.9,539.8 455.3,532.5 460.0,524.3 C464.7,516.1 467.1,510.2 470.8,509.3 C474.5,508.4 478.7,513.6 478.3,520.0 C477.9,526.4 473.1,531.6 468.6,541.5 C464.1,551.4 460.9,558.2 455.8,569.3 C450.7,580.4 445.9,590.8 442.9,597.2 C439.9,603.6 442.0,605.8 440.7,601.5Z" fill="#8f8a68"/>
 <path d="M440.7,599.4 C439.6,598.1 436.9,587.3 438.6,577.9 C440.3,568.5 444.6,562.5 449.3,552.2 C454.0,541.9 457.5,534.2 462.2,526.5 C466.9,518.8 472.0,512.3 472.9,513.6 C473.8,514.9 470.4,523.9 466.5,532.9 C462.6,541.9 458.1,548.3 453.6,558.6 C449.1,568.9 446.6,576.2 444.0,584.4 C441.4,592.6 441.8,600.7 440.7,599.4Z" fill="#b0ab84"/>
 <path d="M469.7,507.6 C468.0,502.6 467.2,495.6 466.8,488.3 C466.4,481.0 465.2,477.1 467.7,470.9 C470.2,464.7 473.1,461.3 479.3,457.4 C485.5,453.5 490.9,453.3 498.6,451.6 C506.3,449.9 511.9,449.4 517.9,448.7 C523.9,448.0 525.8,447.0 528.5,448.2 C531.2,449.4 530.6,448.4 531.4,454.5 C532.2,460.6 532.8,469.0 532.4,478.6 C532.0,488.2 532.0,495.0 529.5,502.7 C527.0,510.4 524.4,513.5 519.8,517.2 C515.2,520.9 512.5,521.1 506.3,521.1 C500.1,521.1 495.2,518.8 489.0,517.2 C482.8,515.6 479.3,515.2 475.4,513.3 C471.5,511.4 471.4,512.6 469.7,507.6Z" fill="#8f8b68"/><path d="M467.7,470.9 C470.2,464.7 473.1,461.3 479.3,457.4 C485.5,453.5 490.9,453.3 498.6,451.6 C506.3,449.9 512.1,449.1 517.9,448.7 C523.7,448.3 526.8,447.6 527.6,449.7 C528.4,451.8 525.7,455.4 521.8,459.3 C517.9,463.2 514.9,464.8 508.3,469.0 C501.7,473.2 495.8,475.5 489.0,480.5 C482.2,485.5 478.6,490.5 474.5,494.0 C470.4,497.5 470.2,499.0 468.7,497.9 C467.2,496.8 467.0,493.7 466.8,488.3 C466.6,482.9 465.2,477.1 467.7,470.9Z" fill="#aeaa83"/><path d="M470.6,483.4 C472.0,478.8 474.7,474.8 479.3,470.9 C483.9,467.0 488.0,466.4 493.8,464.1 C499.6,461.8 502.7,461.2 508.3,459.3 C513.9,457.4 519.9,453.9 521.8,454.5 C523.7,455.1 521.6,459.1 517.9,462.2 C514.2,465.3 509.6,466.2 503.4,469.9 C497.2,473.6 493.2,475.7 487.0,480.5 C480.8,485.3 475.8,493.4 472.5,494.0 C469.2,494.6 469.2,488.0 470.6,483.4Z" fill="#77734f"/><path d="M471.6,497.9 C473.9,493.3 478.7,490.5 484.1,486.3 C489.5,482.1 492.6,480.6 498.6,476.7 C504.6,472.8 509.0,470.9 514.0,467.0 C519.0,463.1 524.1,455.1 523.7,457.4 C523.3,459.7 516.7,470.5 512.1,478.6 C507.5,486.7 504.6,490.2 500.5,497.9 C496.4,505.6 496.0,513.3 491.8,517.2 C487.6,521.1 483.2,518.7 479.3,517.2 C475.4,515.7 474.0,513.4 472.5,509.5 C471.0,505.6 469.3,502.5 471.6,497.9Z" fill="#c2be96"/><path d="M491.8,517.2 C491.6,513.0 496.4,505.6 500.5,497.9 C504.6,490.2 507.8,485.7 512.1,478.6 C516.4,471.5 520.6,461.2 521.8,462.2 C523.0,463.2 520.6,475.3 517.9,483.4 C515.2,491.5 511.6,495.6 508.3,502.7 C505.0,509.8 504.8,516.2 501.5,519.1 C498.2,522.0 492.0,521.4 491.8,517.2Z" fill="#6f6b4d"/><path d="M506.3,520.1 C505.5,516.8 510.7,511.0 514.0,502.7 C517.3,494.4 519.8,487.7 522.7,478.6 C525.6,469.5 526.8,459.3 528.5,457.4 C530.2,455.5 530.8,462.8 531.4,469.0 C532.0,475.2 532.2,480.6 531.4,488.3 C530.6,496.0 530.3,501.4 527.6,507.6 C524.9,513.8 522.2,516.6 517.9,519.1 C513.6,521.6 507.1,523.4 506.3,520.1Z" fill="#9b9775"/><path d="M521.8,490.2 C523.4,480.9 525.9,470.4 527.6,469.0 C529.3,467.6 530.4,476.7 530.4,483.4 C530.4,490.1 529.7,496.3 527.6,502.7 C525.5,509.1 521.0,517.8 519.8,515.3 C518.6,512.8 520.2,499.5 521.8,490.2Z" fill="#b9b58e"/>
 <path d="M375,396 C372,418 380,442 396,442 C410,442 417,422 414,396 C405,390 384,390 375,396Z" fill="url(#lobe)"/>
 <path d="M375,420 C378,434 386,442 396,442 C408,442 414,432 415,418" stroke="#b8404f" stroke-width="1.3" fill="none" opacity="0.55"/>
</g>
<g id="rf" clip-path="url(#rfbox)"><path d="M1041.6,426.7 C1022.7,429.1 1031.9,430.0 1025.5,432.1 C1019.1,434.2 1015.3,435.5 1009.4,437.4 C1003.5,439.3 1000.8,439.6 996.0,441.5 C991.2,443.4 989.6,443.1 985.3,446.8 C981.0,450.5 980.0,457.0 974.6,460.2 C969.2,463.4 963.9,460.8 958.5,462.9 C953.1,465.0 950.5,466.9 947.8,470.9 C945.1,474.9 949.9,480.0 945.1,483.0 C940.3,486.0 932.2,481.1 923.6,485.7 C915.0,490.3 909.7,496.4 902.2,505.8 C894.7,515.2 890.9,524.6 886.1,532.6 C881.3,540.6 878.0,542.9 878.0,546.0 C878.0,549.1 881.3,547.6 886.1,548.2 C890.9,548.8 897.4,547.5 902.2,549.2 C907.0,550.9 911.8,552.6 910.2,556.8 C908.6,561.0 898.9,563.2 894.1,570.2 C889.3,577.2 888.5,584.4 886.1,591.6 C883.7,598.8 880.5,602.9 882.1,606.4 C883.7,609.9 889.0,607.7 894.1,609.0 C899.2,610.3 902.9,610.1 907.5,613.1 C912.1,616.1 914.2,620.1 916.9,623.8 C919.6,627.5 916.9,629.7 920.9,631.8 C924.9,633.9 930.6,632.3 937.0,634.5 C943.4,636.7 949.3,639.6 953.1,642.6 C956.9,645.6 951.0,647.2 955.8,649.3 C960.6,651.4 969.8,651.4 977.3,653.3 C984.8,655.2 986.3,658.3 993.3,658.6 C1000.3,658.9 1005.7,655.1 1012.1,654.6 C1018.5,654.1 1019.6,656.3 1025.5,656.0 C1031.4,655.7 1022.7,652.5 1041.6,653.3 C1060.5,654.1 1104.3,706.7 1120.0,660.0 C1135.7,613.3 1135.7,466.7 1120.0,420.0 C1104.3,373.3 1060.5,424.3 1041.6,426.7Z" fill="#cf5a6c"/><g clip-path="url(#rfclip)"><path d="M971.9,449.5 C974.0,443.9 980.5,445.5 988.0,442.8 C995.5,440.1 1001.9,438.5 1009.4,436.1 C1016.9,433.7 1019.1,432.3 1025.5,430.7 C1031.9,429.1 1038.4,415.1 1041.6,428.0 C1044.8,440.9 1044.8,483.3 1041.6,495.1 C1038.4,506.9 1031.9,490.8 1025.5,487.0 C1019.1,483.2 1016.4,479.5 1009.4,476.3 C1002.4,473.1 997.1,472.0 990.7,470.9 C984.3,469.8 981.1,475.2 977.3,470.9 C973.5,466.6 969.8,455.1 971.9,449.5Z" fill="url(#pk2)"/><path d="M1020.2,484.4 C1021.3,474.7 1026.6,476.3 1030.9,473.6 C1035.2,470.9 1039.5,451.6 1041.6,470.9 C1043.7,490.2 1043.7,551.4 1041.6,570.2 C1039.5,589.0 1034.7,569.6 1030.9,564.8 C1027.1,560.0 1023.9,554.6 1022.8,546.0 C1021.7,537.4 1026.0,534.2 1025.5,521.9 C1025.0,509.6 1019.1,494.1 1020.2,484.4Z" fill="url(#pk1)"/><path d="M945.1,473.6 C946.7,468.2 952.6,467.7 958.5,465.6 C964.4,463.5 970.3,460.2 974.6,462.9 C978.9,465.6 979.4,472.0 979.9,479.0 C980.4,486.0 980.5,493.5 977.3,497.8 C974.1,502.1 969.2,501.5 963.8,500.4 C958.4,499.3 954.1,497.8 950.4,492.4 C946.7,487.0 943.5,479.0 945.1,473.6Z" fill="url(#pk1)"/><path d="M878.0,546.0 C880.1,538.5 893.1,520.3 902.2,508.5 C911.3,496.7 915.0,491.8 923.6,487.0 C932.2,482.2 938.1,482.8 945.1,484.4 C952.1,486.0 953.7,488.7 958.5,495.1 C963.3,501.5 966.5,507.4 969.2,516.5 C971.9,525.6 974.6,532.6 971.9,540.7 C969.2,548.8 966.5,555.2 955.8,556.8 C945.1,558.4 931.2,550.9 918.3,548.7 C905.4,546.5 899.6,546.5 891.5,546.0 C883.4,545.5 875.9,553.5 878.0,546.0Z" fill="url(#pk1)"/><path d="M977.3,481.7 C984.3,474.5 991.2,472.8 998.7,472.3 C1006.2,471.8 1010.0,473.4 1014.8,479.0 C1019.6,484.6 1021.7,490.7 1022.8,500.4 C1023.9,510.1 1022.9,517.6 1020.2,527.3 C1017.5,537.0 1015.8,542.8 1009.4,548.7 C1003.0,554.6 996.6,555.7 988.0,556.8 C979.4,557.9 972.4,558.9 966.5,554.1 C960.6,549.3 959.0,541.7 958.5,532.6 C958.0,523.5 960.0,518.7 963.8,508.5 C967.6,498.3 970.3,488.9 977.3,481.7Z" fill="url(#pk4)"/><path d="M882.1,606.4 C880.5,603.2 883.7,598.8 886.1,591.6 C888.5,584.4 889.3,576.6 894.1,570.2 C898.9,563.8 898.9,561.8 910.2,559.4 C921.5,557.0 938.1,557.0 950.4,558.1 C962.7,559.2 971.9,560.2 971.9,564.8 C971.9,569.4 959.0,575.0 950.4,580.9 C941.8,586.8 937.0,588.9 929.0,594.3 C921.0,599.7 917.2,605.0 910.2,607.7 C903.2,610.4 899.7,608.0 894.1,607.7 C888.5,607.4 883.7,609.6 882.1,606.4Z" fill="url(#pk1)"/><path d="M881.4,606.8 C879.5,603.6 887.6,599.1 889.5,592.4 C891.4,585.7 887.6,580.2 891.1,573.1 C894.6,566.0 899.8,562.2 907.2,557.0 C914.6,551.8 919.7,548.3 928.1,547.3 C936.5,546.3 942.9,549.3 949.0,552.2 C955.1,555.1 959.9,557.0 958.6,561.8 C957.3,566.6 948.6,570.8 942.5,576.3 C936.4,581.8 933.6,583.7 928.1,589.2 C922.6,594.7 921.0,599.7 915.2,603.6 C909.4,607.5 905.9,607.9 899.1,608.5 C892.3,609.1 883.3,610.0 881.4,606.8Z" fill="url(#pk1)"/><path d="M992.4,656.7 C993.0,651.9 995.6,641.9 1000.4,635.8 C1005.2,629.7 1009.1,629.3 1016.5,626.1 C1023.9,622.9 1030.3,621.0 1037.4,619.7 C1044.5,618.4 1049.0,613.9 1051.9,619.7 C1054.8,625.5 1056.4,641.9 1051.9,648.7 C1047.4,655.5 1037.1,651.6 1029.4,653.5 C1021.7,655.4 1019.7,657.0 1013.3,658.3 C1006.9,659.6 1001.4,660.2 997.2,659.9 C993.0,659.6 991.8,661.5 992.4,656.7Z" fill="url(#pk2)"/><path d="M953.8,645.4 C955.1,640.9 959.0,636.1 965.1,629.4 C971.2,622.7 976.7,619.1 984.4,611.7 C992.1,604.3 996.6,598.5 1003.7,592.4 C1010.8,586.3 1013.0,584.6 1019.7,581.1 C1026.4,577.6 1031.0,576.0 1037.4,574.7 C1043.8,573.4 1049.0,566.3 1051.9,574.7 C1054.8,583.1 1058.3,606.2 1051.9,616.5 C1045.5,626.8 1029.3,622.2 1019.7,626.1 C1010.1,630.0 1010.1,632.6 1003.7,635.8 C997.3,639.0 994.0,639.6 987.6,642.2 C981.2,644.8 977.3,646.8 971.5,648.7 C965.7,650.6 962.1,652.6 958.6,651.9 C955.1,651.2 952.5,649.9 953.8,645.4Z" fill="url(#pk5)"/><path d="M918.4,629.4 C921.3,626.8 928.7,626.8 936.1,622.9 C943.5,619.0 948.3,615.2 955.4,610.1 C962.5,605.0 965.1,602.4 971.5,597.2 C977.9,592.0 981.2,588.8 987.6,584.3 C994.0,579.8 998.6,576.0 1003.7,574.7 C1008.8,573.4 1014.0,574.4 1013.3,577.9 C1012.6,581.4 1006.2,586.6 1000.4,592.4 C994.6,598.2 991.5,600.7 984.4,606.8 C977.3,612.9 972.2,617.1 965.1,622.9 C958.0,628.7 956.1,632.3 949.0,635.8 C941.9,639.3 935.2,640.6 929.7,640.6 C924.2,640.6 923.9,638.0 921.6,635.8 C919.3,633.6 915.5,632.0 918.4,629.4Z" fill="url(#pk1)"/><path d="M912.0,611.7 C913.3,607.2 922.0,600.1 928.1,592.4 C934.2,584.7 936.4,578.9 942.5,573.1 C948.6,567.3 952.2,566.0 958.6,563.4 C965.0,560.8 967.6,560.5 974.7,560.2 C981.8,559.9 991.7,559.5 994.0,561.8 C996.3,564.1 991.8,567.6 986.0,571.5 C980.2,575.4 972.5,576.9 965.1,581.1 C957.7,585.3 955.4,586.6 949.0,592.4 C942.6,598.2 938.4,605.6 932.9,610.1 C927.4,614.6 925.8,614.6 921.6,614.9 C917.4,615.2 910.7,616.2 912.0,611.7Z" fill="url(#pk5)"/><path d="M974.7,560.2 C976.0,557.9 985.0,560.5 994.0,560.2 C1003.0,559.9 1011.0,558.3 1019.7,558.6 C1028.4,558.9 1031.0,560.8 1037.4,561.8 C1043.8,562.8 1049.0,560.8 1051.9,563.4 C1054.8,566.0 1054.8,572.8 1051.9,574.7 C1049.0,576.6 1045.1,572.8 1037.4,573.1 C1029.7,573.4 1021.3,576.3 1013.3,576.3 C1005.3,576.3 1002.3,574.1 997.2,573.1 C992.1,572.1 992.1,574.1 987.6,571.5 C983.1,568.9 973.4,562.5 974.7,560.2Z" fill="url(#pk2)"/><g filter="url(#soft)"><path d="M902.2,554.1 C906.5,554.4 915.0,554.8 923.6,555.4 C932.2,556.0 937.6,556.2 945.1,557.3 C952.6,558.4 958.0,560.1 961.2,560.8" stroke="#b53a4e" stroke-width="2.6" fill="none" stroke-linecap="round" opacity="0.75"/><path d="M958.5,495.1 C960.1,496.7 963.8,498.8 966.5,503.1 C969.2,507.4 970.8,513.8 971.9,516.5" stroke="#b53a4e" stroke-width="2.6" fill="none" stroke-linecap="round" opacity="0.75"/><path d="M1022.8,500.4 C1024.4,503.1 1028.2,505.7 1030.9,513.8 C1033.6,521.9 1035.1,535.3 1036.2,540.7" stroke="#b53a4e" stroke-width="2.1" fill="none" stroke-linecap="round" opacity="0.75"/><path d="M928.1,548.1 C931.0,548.6 936.4,548.0 942.5,550.6 C948.6,553.2 955.4,558.9 958.6,561.0" stroke="#b53a4e" stroke-width="2.9" fill="none" stroke-linecap="round" opacity="0.75"/><path d="M958.6,562.1 C962.5,561.9 970.8,561.0 977.9,561.0 C985.0,561.0 986.3,561.5 994.0,562.1 C1001.7,562.7 1008.1,563.0 1016.5,564.2 C1024.9,565.4 1031.9,567.4 1035.8,568.2" stroke="#b53a4e" stroke-width="3.6" fill="none" stroke-linecap="round" opacity="0.75"/><path d="M971.5,597.2 C974.7,594.6 981.8,588.6 987.6,584.3 C993.4,580.0 997.8,577.3 1000.4,575.5" stroke="#b53a4e" stroke-width="2.9" fill="none" stroke-linecap="round" opacity="0.75"/><path d="M949.0,592.4 C947.1,594.3 942.5,598.5 939.3,602.0 C936.1,605.5 934.2,608.5 932.9,610.1" stroke="#b53a4e" stroke-width="2.3" fill="none" stroke-linecap="round" opacity="0.75"/><path d="M903.9,607.6 C906.5,607.9 912.0,608.8 916.8,609.3 C921.6,609.8 925.8,609.9 928.1,610.1" stroke="#b53a4e" stroke-width="2.3" fill="none" stroke-linecap="round" opacity="0.75"/><path d="M965.1,558.6 C969.6,558.0 979.2,557.0 987.6,555.4 C996.0,553.8 1000.5,553.2 1006.9,550.6 C1013.3,548.0 1017.1,544.1 1019.7,542.5" stroke="#b53a4e" stroke-width="1.8" fill="none" stroke-linecap="round" opacity="0.75"/><path d="M984.4,606.8 C987.0,604.6 992.1,599.5 997.2,595.6 C1002.3,591.7 1007.5,589.1 1010.1,587.5" stroke="#b53a4e" stroke-width="1.8" fill="none" stroke-linecap="round" opacity="0.75"/></g></g></g>
<g id="rstem">
 <path d="M938.2,319.3 C935.2,324.9 935.7,341.2 932.9,353.6 C930.1,366.0 928.6,371.1 924.3,381.4 C920.0,391.7 912.7,398.6 911.4,405.0 C910.1,411.4 914.5,416.2 917.9,413.6 C921.3,411.0 924.5,400.2 928.6,392.1 C932.7,384.0 934.6,382.3 938.2,372.9 C941.8,363.5 944.9,354.4 946.8,345.0 C948.7,335.6 949.6,330.8 947.9,325.7 C946.2,320.6 941.2,313.7 938.2,319.3Z" fill="#8d8867"/>
 <path d="M941.4,325.7 C940.3,328.3 940.8,343.7 938.2,355.7 C935.6,367.7 932.7,375.4 928.6,385.7 C924.5,396.0 918.3,405.4 917.9,407.1 C917.5,408.8 922.8,401.6 926.4,394.3 C930.0,387.0 932.7,381.0 936.1,370.7 C939.5,360.4 942.5,351.9 943.6,342.9 C944.7,333.9 942.5,323.1 941.4,325.7Z" fill="#a9a47e"/>
 <path d="M936,300 C932.5,305.4 936.5,312.2 940.7,327.0 C944.9,341.8 949.9,355.1 957.2,374.0 C964.5,392.9 968.6,402.6 977.3,421.5 C986.0,440.4 993.9,457.2 1000.8,468.7 C1007.7,480.2 1008.4,476.7 1012.0,479.0 C1015.6,481.3 1017.9,482.1 1019.0,480.0 C1020.1,477.9 1022.4,480.4 1017.4,468.7 C1012.4,457.0 1002.1,440.4 993.8,421.5 C985.5,402.6 983.2,392.9 976.1,374.0 C969.0,355.1 962.0,341.8 958.4,327.0 C954.8,312.2 962.5,305.4 958.0,300.0 C953.5,294.6 939.5,294.6 936.0,300.0Z" fill="#b9b48c"/>
 <path d="M1019,480 C1020.9,478.1 1022.4,480.4 1017.4,468.7 C1012.4,457.0 1002.1,440.4 993.8,421.5 C985.5,402.6 981.7,389.3 976.1,374.0 C970.5,358.7 966.8,343.8 966.0,345.0 C965.2,346.2 968.2,365.0 972.0,380.0 C975.8,395.0 979.4,405.0 985.0,420.0 C990.6,435.0 995.4,443.4 1000.0,455.0 C1004.6,466.6 1004.2,473.0 1008.0,478.0 C1011.8,483.0 1017.1,481.9 1019.0,480.0Z" fill="#8f8a6a" opacity="0.85"/>
 <path d="M941,327 C942.4,329.0 947.8,339.4 952.0,350.0 C956.2,360.6 961.4,378.0 962.0,380.0 C962.6,382.0 958.4,368.0 955.0,360.0 C951.6,352.0 947.8,346.6 945.0,340.0 C942.2,333.4 939.6,325.0 941.0,327.0Z" fill="#c6c197"/>
 <path d="M1012,479 C1011.0,479.7 1006.2,476.5 1000.8,468.7 C995.4,460.9 986.8,444.7 985.0,440.0 C983.2,435.3 987.8,440.0 992.0,445.0 C996.2,450.0 1002.0,458.2 1006.0,465.0 C1010.0,471.8 1013.0,478.3 1012.0,479.0Z" fill="#8a8566"/>
 <path d="M851,79 C845.4,79.5 850.1,77.0 851.1,81.3 C852.1,85.6 852.4,91.5 856.2,100.3 C860.0,109.1 864.0,116.5 870.1,125.4 C876.2,134.3 880.9,137.6 886.8,144.9 C892.7,152.2 895.8,153.9 899.4,161.7 C903.0,169.5 902.5,172.9 905.0,184.0 C907.5,195.1 908.3,204.0 911.9,217.4 C915.5,230.8 918.6,236.9 923.1,250.9 C927.6,264.9 930.9,273.3 934.2,287.2 C937.5,301.1 938.1,310.4 939.8,320.6 C941.5,330.8 938.7,334.7 942.6,338.2 C946.5,341.7 956.5,341.7 959.3,338.2 C962.1,334.7 956.6,328.0 956.6,320.6 C956.6,313.2 958.2,311.7 959.3,301.1 C960.4,290.5 961.8,281.0 962.1,267.6 C962.4,254.2 961.8,246.5 960.7,234.2 C959.6,221.9 959.7,216.9 956.6,206.3 C953.5,195.7 951.0,190.7 945.4,181.2 C939.8,171.7 936.0,168.4 928.7,158.9 C921.4,149.4 916.4,144.4 909.1,133.8 C901.8,123.2 898.5,116.4 892.4,105.9 C886.3,95.4 881.2,86.7 878.5,81.3 C875.8,75.9 884.5,79.5 879.0,79.0 C873.5,78.5 856.6,78.5 851.0,79.0Z" fill="#bcb78f"/>
 <path d="M851,79 L851.1,81.3 L878.5,81.3 L892.4,105.9 L909.1,133.8 L928.7,158.9 L941.2,172.8 L937.0,174.2 L917.5,161.7 L900.8,147.7 L886.8,133.8 L872.9,122.6 L861.7,105.9Z" fill="#8e8969"/>
 <path d="M861.7,81.3 C859.5,75.8 865.1,76.4 870.1,81.3 C875.1,86.2 880.1,96.0 886.8,105.9 C893.5,115.8 901.4,125.7 903.6,131.0 C905.8,136.3 902.5,136.9 898.0,132.4 C893.5,127.9 888.6,118.9 881.3,108.7 C874.0,98.5 863.9,86.8 861.7,81.3Z" fill="#a7a17f"/>
 <path d="M867.3,124.0 C869.5,122.9 880.1,129.1 886.8,133.8 C893.5,138.5 894.7,142.1 900.8,147.7 C906.9,153.3 910.3,156.4 917.5,161.7 C924.7,167.0 930.3,167.5 937.0,174.2 C943.7,180.9 946.8,185.3 951.0,195.1 C955.2,204.9 956.0,213.0 957.9,223.0 C959.8,233.0 961.0,243.1 960.7,245.3 C960.4,247.5 959.1,241.4 956.6,234.2 C954.1,227.0 952.1,217.5 948.2,209.1 C944.3,200.7 942.0,198.4 937.0,192.3 C932.0,186.2 929.2,183.4 923.1,178.4 C917.0,173.4 913.1,172.2 906.4,167.2 C899.7,162.2 895.7,158.9 889.6,153.3 C883.5,147.7 880.2,145.3 875.7,139.4 C871.2,133.5 865.1,125.1 867.3,124.0Z" fill="#c9c49a"/>
 <path d="M899.4,161.7 C898.6,164.5 902.5,172.9 905.0,184.0 C907.5,195.1 908.3,204.0 911.9,217.4 C915.5,230.8 918.6,236.9 923.1,250.9 C927.6,264.9 930.9,273.3 934.2,287.2 C937.5,301.1 938.1,310.4 939.8,320.6 C941.5,330.8 941.2,334.7 942.6,338.2 C944.0,341.7 946.8,343.9 946.8,338.2 C946.8,332.5 945.4,322.5 942.6,309.5 C939.8,296.5 936.7,288.3 932.8,273.2 C928.9,258.1 926.4,249.3 923.1,234.2 C919.8,219.1 918.9,210.7 916.1,197.9 C913.3,185.1 912.4,177.2 909.1,170.0 C905.8,162.8 900.2,158.9 899.4,161.7Z" fill="#8f8a6a"/>
 <path d="M937.0,195.1 C937.6,199.0 944.6,204.1 948.2,211.9 C951.8,219.7 953.3,223.1 955.2,234.2 C957.1,245.3 957.9,253.1 957.9,267.6 C957.9,282.1 956.3,296.1 955.2,306.7 C954.1,317.3 952.1,317.8 952.4,320.6 C952.7,323.4 954.9,330.1 956.6,320.6 C958.3,311.1 959.9,290.5 960.7,273.2 C961.5,255.9 961.8,247.0 960.7,234.2 C959.6,221.4 958.3,217.5 955.2,209.1 C952.1,200.7 949.0,195.1 945.4,192.3 C941.8,189.5 936.4,191.2 937.0,195.1Z" fill="#97916f"/>
 <path d="M932.8,217.4 C932.2,216.3 936.3,228.6 938.4,239.8 C940.5,251.0 942.6,272.1 943.2,273.2 C943.8,274.3 943.3,256.5 941.2,245.3 C939.1,234.1 933.4,218.5 932.8,217.4Z" fill="#fffdfc"/>
 <path d="M864.5,413.3 C868.2,408.9 872.5,407.9 878.9,406.6 C885.3,405.3 890.1,406.6 896.3,406.6 C902.5,406.6 905.6,405.1 909.8,406.6 C914.0,408.1 915.6,410.8 917.5,414.3 C919.4,417.8 917.9,420.4 919.5,423.9 C921.1,427.4 924.0,427.8 925.3,431.7 C926.6,435.6 926.6,438.2 926.2,443.2 C925.8,448.2 926.0,451.7 923.3,456.7 C920.6,461.7 918.7,464.2 912.7,468.3 C906.7,472.4 902.1,474.5 893.4,477.0 C884.7,479.5 875.1,481.5 869.3,480.9 C863.5,480.3 866.2,479.7 864.5,474.1 C862.8,468.5 861.4,462.0 860.6,452.9 C859.8,443.8 859.8,436.7 860.6,428.8 C861.4,420.9 860.8,417.7 864.5,413.3Z" fill="#8a8666"/><path d="M864.5,414.3 C867.6,410.6 875.3,406.5 877.0,410.4 C878.7,414.3 874.7,423.2 873.2,433.6 C871.7,444.0 871.0,454.8 869.3,462.5 C867.6,470.2 866.2,474.1 864.5,472.2 C862.8,470.3 861.2,461.6 860.6,452.9 C860.0,444.2 860.8,436.5 861.6,428.8 C862.4,421.1 861.4,418.0 864.5,414.3Z" fill="#999574"/><path d="M877.0,411.4 C880.1,406.4 888.6,406.0 890.5,408.5 C892.4,411.0 888.4,417.0 886.7,423.9 C885.0,430.8 884.3,435.5 881.8,443.2 C879.3,450.9 875.8,460.6 874.1,462.5 C872.4,464.4 873.0,458.7 873.2,452.9 C873.4,447.1 874.3,441.9 875.1,433.6 C875.9,425.3 873.9,416.4 877.0,411.4Z" fill="#6f6b4c"/><path d="M890.5,419.1 C894.0,414.3 898.6,410.5 904.0,409.5 C909.4,408.5 914.4,411.4 917.5,414.3 C920.6,417.2 920.5,420.0 919.5,423.9 C918.5,427.8 917.0,429.2 912.7,433.6 C908.4,438.0 904.0,440.7 898.2,446.1 C892.4,451.5 887.3,459.2 883.8,460.6 C880.3,462.0 880.3,458.3 880.9,452.9 C881.5,447.5 884.8,440.4 886.7,433.6 C888.6,426.8 887.0,423.9 890.5,419.1Z" fill="#bbb792"/><path d="M917.5,426.8 C919.4,426.2 924.1,429.9 925.3,435.5 C926.5,441.1 925.8,448.2 923.3,454.8 C920.8,461.4 918.7,463.9 912.7,468.3 C906.7,472.7 901.1,474.9 893.4,477.0 C885.7,479.1 875.1,481.4 874.1,478.9 C873.1,476.4 882.8,469.7 888.6,464.5 C894.4,459.3 897.7,458.1 903.1,452.9 C908.5,447.7 912.7,443.6 915.6,438.4 C918.5,433.2 915.6,427.4 917.5,426.8Z" fill="#8f8b69"/><path d="M878.9,472.2 C879.9,470.3 894.6,468.3 903.1,462.5 C911.6,456.7 918.5,444.2 921.4,443.2 C924.3,442.2 922.1,451.9 917.5,457.7 C912.9,463.5 905.9,469.3 898.2,472.2 C890.5,475.1 877.9,474.1 878.9,472.2Z" fill="#c0bd98"/>
</g>
</g>
  <text x="635.5" y="391.3" font-family="Liberation Sans" font-size="14.3" letter-spacing="4.75" fill="#ab9d80">8TH MARCH</text>
  <text x="551" y="561.6" font-family="Liberation Sans" font-size="102" letter-spacing="3" fill="#7d7360">women’s</text>
  <text x="640.5" y="621.5" font-family="Liberation Sans" font-size="40" letter-spacing="11" fill="#a89c7f">DAY</text>
</svg>

<!-- center toolbar icons -->
<svg class="abs" style="left:600px;top:48px" width="20" height="20" viewBox="0 0 20 20" fill="none" stroke="#111" stroke-width="1.1">
  <circle cx="6.7" cy="6.7" r="5.6"/>
  <path d="M6.7 3.8V9.6M3.8 6.7H9.6M10.8 10.8L16.8 16.8"/>
</svg>
<svg class="abs" style="left:650px;top:48px" width="20" height="20" viewBox="0 0 20 20" fill="none" stroke="#111" stroke-width="1.1">
  <path d="M2 3.6H14.6M5.2 3.6V1.6H11.4V3.6M3.6 3.6V16.4H13V3.6M6.4 6V14.4M8.3 6V14.4M10.2 6V14.4"/>
</svg>
<svg class="abs" style="left:700px;top:48px" width="20" height="20" viewBox="0 0 20 20" fill="none" stroke="#111" stroke-width="1.1">
  <path d="M8.5 15.5L2.3 9.3C0.6 7.6 0.8 4.6 2.9 3.2C4.8 2 7.2 2.7 8.5 4.5C9.8 2.7 12.2 2 14.1 3.2C16.2 4.6 16.4 7.6 14.7 9.3Z"/>
</svg>
<svg class="abs" style="left:750px;top:48px" width="20" height="20" viewBox="0 0 20 20" fill="none" stroke="#111" stroke-width="1.1">
  <path d="M1.6 9.4C1.6 5.2 4.6 1.6 8.6 1.6C12.6 1.6 16 5 16 9C16 12 14.4 14.6 12 15.6"/>
  <circle cx="8.6" cy="9" r="1.7"/>
  <path d="M10.4 14.2L10.6 16.6L13.2 16.6"/>
</svg>
<svg class="abs" style="left:800px;top:48px" width="20" height="20" viewBox="0 0 20 20" fill="none" stroke="#111" stroke-width="1.1">
  <path d="M4.6 1V13.2H16.6M1 4.6H13V17M4.6 13.2L16.2 1.6"/>
</svg>
<!-- right toolbar -->
<svg class="abs" style="left:1035px;top:50px" width="17" height="17" viewBox="0 0 17 17" fill="none" stroke="#111" stroke-width="1.1">
  <path d="M1 4.5V2.2Q1 1 2.2 1H4.5M10.5 1H12.8Q14 1 14 2.2V4.5M14 10.5V12.8Q14 14 12.8 14H10.5M4.5 14H2.2Q1 14 1 12.8V10.5"/>
  <circle cx="7.5" cy="7.5" r="1.6" fill="#111"/>
</svg>
<div class="t" style="left:1059px;top:50px;font-size:12px;letter-spacing:-0.4px">Search</div>
<svg class="abs" style="left:1118px;top:49.5px" width="18" height="17" viewBox="0 0 18 17" fill="none" stroke="#111" stroke-width="1.1">
  <path d="M2 2.5L4 0.8L15 11.8L16 15.8L12 14.8L1.2 4"/>
  <path d="M1 16L13.5 1.5L15.8 3.8L2.8 16.2Z"/>
  <path d="M11 4L13 6"/>
</svg>
<div class="t" style="left:1143px;top:50px;font-size:12px;letter-spacing:-0.25px">Edit &amp; Create</div>
<svg class="abs" style="left:1220px;top:54px" width="11" height="8"><path d="M1 1.5L5.5 6L10 1.5" fill="none" stroke="#0078d7" stroke-width="1.6"/></svg>
<svg class="abs" style="left:1253px;top:48.5px" width="18" height="17" viewBox="0 0 18 17" fill="none" stroke="#111" stroke-width="1.1">
  <path d="M1 5.5V14.6H10"/>
  <path d="M3 14C3.5 9 7 6.5 11.2 6.5V9.5L16.2 5L11.2 1V3.8C6 4.5 3.2 8 3 14"/>
</svg>
<div class="t" style="left:1278px;top:50px;font-size:12px;letter-spacing:-0.35px">Share</div>
<svg class="abs" style="left:1335px;top:48px" width="18" height="18" viewBox="0 0 18 18" fill="none" stroke="#111" stroke-width="1.1">
  <path d="M4.6 5.4V1.3H12.6V5.4M4.6 13.2H1.2V5.4H16V13.2H12.6M4.6 10H12.6V16.7H4.6Z"/>
  <path d="M2.6 7.4h.8" stroke-width="1"/>
</svg>
<svg class="abs" style="left:1383px;top:55.5px" width="18" height="5"><rect x="1.3" y="1.3" width="2.2" height="2.2" fill="#111"/><rect x="7.3" y="1.3" width="2.2" height="2.2" fill="#111"/><rect x="13.3" y="1.3" width="2.2" height="2.2" fill="#111"/></svg>
<!-- watermark -->
<svg class="abs" style="left:1130px;top:5px" width="287" height="45" viewBox="1130 5 287 45">
 <text x="1142.4" y="38.6" font-family="Liberation Sans" font-weight="bold" font-size="32" textLength="263.6" lengthAdjust="spacingAndGlyphs" fill="none" stroke="#fff" stroke-width="4" stroke-opacity="0.5" stroke-linejoin="round">ThuThuatPhanMem.vn</text>
 <g opacity="0.5"><text x="1142.4" y="38.6" font-family="Liberation Sans" font-weight="bold" font-size="32" textLength="263.6" lengthAdjust="spacingAndGlyphs" stroke-width="1.3" stroke-linejoin="round"><tspan fill="#e44a63" stroke="#e44a63">ThuThuat</tspan><tspan fill="#3aa6ea" stroke="#3aa6ea">PhanMem.vn</tspan></text></g>
</svg>

<div id="dlg">
  <div class="abs" style="left:0;top:0;width:361px;height:30px;background:#fff"></div>
  <svg class="abs" style="left:10px;top:7px" width="12" height="15" viewBox="0 0 12 15">
    <path d="M0.5 0.5H9L11.5 3V14.5H0.5Z" fill="#fff" stroke="#8a8a8a"/>
    <path d="M2 4H10V12H2Z" fill="#fff"/>
    <path d="M2 12V7L4 5L5 8L7 6L8 8L10 5V12Z" fill="#1a73d9"/>
  </svg>
  <div class="t" style="left:29px;top:8px;font-size:12px;color:#000">Thuthuatphanmem.jpg Properties</div>
  <svg class="abs" style="left:340px;top:9px" width="12" height="12"><path d="M0.5 0.5L11.5 11.5M11.5 0.5L0.5 11.5" stroke="#000" stroke-width="1.1"/></svg>
  <!-- tabs -->
  <div class="abs" style="left:6px;top:57px;width:347px;height:413px;background:#fff;border:1px solid #d9d9d9"></div>
  <div class="abs tab" style="left:8px;top:39px;width:47px;height:19px">General</div>
  <div class="abs tab" style="left:55px;top:39px;width:48px;height:19px">Security</div>
  <div class="abs tab sel" style="left:103px;top:37px;width:50px;height:21px">Details</div>
  <div class="abs tab" style="left:153px;top:39px;width:92px;height:19px">Previous Versions</div>
  <!-- list box -->
  <div class="abs" style="left:21px;top:70px;width:319px;height:358px;background:#fff;border:1px solid #828790"></div>
  <div class="abs" style="left:321px;top:71px;width:17px;height:356px;background:#f0f0f0"></div>
  <div class="abs" style="left:322px;top:148px;width:15px;height:83px;background:#cdcdcd"></div>
  <svg class="abs" style="left:324px;top:77px" width="12" height="8"><path d="M2.5 6L6 2.5L9.5 6" fill="none" stroke="#606060" stroke-width="1.6"/></svg>
  <svg class="abs" style="left:324px;top:412px" width="12" height="8"><path d="M2.5 2L6 5.5L9.5 2" fill="none" stroke="#606060" stroke-width="1.6"/></svg>
  <div class="abs" style="left:150px;top:72px;width:1px;height:23px;background:#e5e5e5"></div>
  <div class="abs" style="left:302px;top:72px;width:1px;height:23px;background:#e5e5e5"></div>
  <div class="row" style="top:74px;left:29px">Property</div>
  <div class="row" style="top:74px;left:157px">Value</div>
  <div class="grp" style="top:92px;left:35px">Image</div>
  <div class="abs" style="left:73px;top:100px;width:238px;height:1px;background:#c7d3ea"></div>
  <div class="row" style="top:112px;left:29px">Image ID</div>
  <div class="abs" style="left:27px;top:130px;width:276px;height:17px;background:#0078d7"></div>
  <div class="row" style="top:130px;left:29px;color:#fff">Dimensions</div>
  <div class="row" style="top:130px;left:157px;color:#fff">3126 x 2084</div>
  <div class="row" style="top:148px;left:29px">Width</div><div class="row" style="top:148px;left:157px">3126 pixels</div>
  <div class="row" style="top:166px;left:29px">Height</div><div class="row" style="top:166px;left:157px">2084 pixels</div>
  <div class="row" style="top:184px;left:29px">Horizontal resolution</div><div class="row" style="top:184px;left:157px">300 dpi</div>
  <div class="row" style="top:202px;left:29px">Vertical resolution</div><div class="row" style="top:202px;left:157px">300 dpi</div>
  <div class="row" style="top:220px;left:29px">Bit depth</div><div class="row" style="top:220px;left:157px">32</div>
  <div class="row" style="top:238px;left:29px">Compression</div>
  <div class="row" style="top:256px;left:29px">Resolution unit</div>
  <div class="row" style="top:274px;left:29px">Color representation</div>
  <div class="row" style="top:292px;left:29px">Compressed bits/pixel</div>
  <div class="grp" style="top:314px;left:35px">Camera</div>
  <div class="abs" style="left:79px;top:322px;width:232px;height:1px;background:#c7d3ea"></div>
  <div class="row" style="top:334px;left:29px">Camera maker</div>
  <div class="row" style="top:352px;left:29px">Camera model</div>
  <div class="row" style="top:370px;left:29px">F-stop</div>
  <div class="row" style="top:388px;left:29px">Exposure time</div>
  <div class="row" style="top:406px;left:29px">ISO speed</div>
  <div class="t" style="left:21px;top:440px;font-size:11.5px;letter-spacing:-0.5px;color:#0066cc;text-decoration:underline">Remove Properties and Personal Information</div>
  <div class="btn" style="left:119px;border:2px solid #0078d7;line-height:17px">OK</div>
  <div class="btn" style="left:200px">Cancel</div>
  <div class="btn" style="left:281px;background:#cccccc;border-color:#bfbfbf;color:#838383">Apply</div>
</div>

<div class="abs" style="left:1399px;top:898px;width:2px;height:8px;background:#111;border-radius:1px"></div>
</body></html>
